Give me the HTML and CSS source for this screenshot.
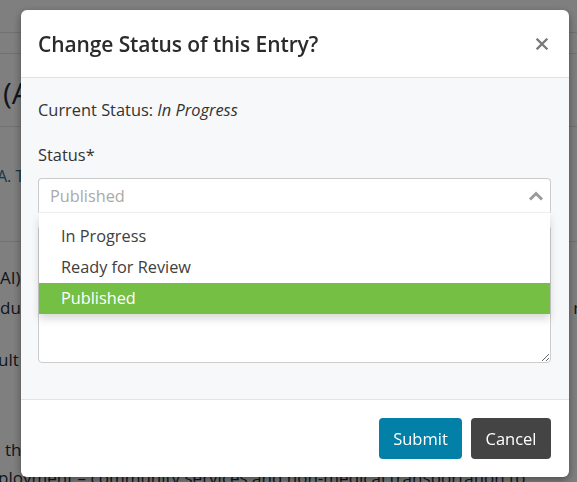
FILE: index.html
```html
<!DOCTYPE html>
<html>
<head>
<meta charset="utf-8">
<link rel="stylesheet" href="styles.css">
</head>
<body>
<div class="page">
  <div class="nav"></div>
  <div class="subnav"></div>
  <div class="title-band"><h1 class="page-title">(AI) Entry Record</h1></div>
  <div class="meta-band"><a class="author">A. Thompson, B. Rivera</a></div>
  <div class="content">
    <p class="line l1"><span>AI) the programme was developed to support</span><span class="tag">Re</span></p>
    <p class="line l2"><span>duced mobility across the regional network</span><span>rec</span></p>
    <p class="line l3"><span>ult was assessed at each stage of the study</span><span>ad</span></p>
    <p class="line l4"><span>the participants received home supports and</span><span>ro</span></p>
    <p class="line l5"><span>ployment – community services and non-medical transportation to</span></p>
  </div>
</div>

<div class="overlay"></div>

<div class="modal">
  <div class="modal-header">
    <h2 class="modal-title">Change Status of this Entry?</h2>
    <button class="close" aria-label="Close">
      <svg width="12" height="12" viewBox="0 0 12 12"><path d="M1.5 1.5 L10.5 10.5 M10.5 1.5 L1.5 10.5" stroke="#7a7a7a" stroke-width="2.3" stroke-linecap="square"/></svg>
    </button>
  </div>
  <div class="modal-body">
    <p class="current">Current Status: <em>In Progress</em></p>
    <label class="label">Status*</label>
    <div class="select-wrap">
      <div class="select">
        <span class="placeholder">Published</span>
        <svg class="chev" width="16" height="10" viewBox="0 0 16 10"><path d="M2 8.5 L8 2.5 L14 8.5" fill="none" stroke="#9a9a9a" stroke-width="3"/></svg>
      </div>
      <ul class="menu">
        <li class="opt">In Progress</li>
        <li class="opt">Ready for Review</li>
        <li class="opt active">Published</li>
      </ul>
    </div>
    <textarea class="notes"></textarea>
  </div>
  <div class="modal-footer">
    <button class="btn btn-submit">Submit</button>
    <button class="btn btn-cancel">Cancel</button>
  </div>
</div>
</body>
</html>
```

FILE: styles.css
```css
html, body {
  margin: 0;
  padding: 0;
  width: 577px;
  height: 482px;
  overflow: hidden;
  font-family: "Open Sans", "Noto Sans", sans-serif;
}

.page {
  background: #fff;
  color: #2c3a46;
}

.nav {
  height: 32px;
  border-bottom: 1px solid #e3e3e3;
}

.subnav {
  height: 20px;
  border-bottom: 1px solid #e3e3e3;
}

.title-band {
  height: 72px;
  border-bottom: 1px solid #e3e3e3;
  display: flex;
  align-items: center;
}

.page-title {
  margin: 4px 0 0 3px;
  font-size: 30px;
  font-weight: 400;
  white-space: nowrap;
  color: #1d2d3c;
}

.meta-band {
  height: 115px;
  box-sizing: border-box;
  padding-top: 38px;
  border-bottom: 1px solid #e3e3e3;
}

.author {
  display: block;
  margin-left: -3px;
  color: #2a6f8f;
  font-size: 16px;
  white-space: nowrap;
}

.content {
  font-size: 17px;
  color: #1d2d3c;
  padding-top: 21px;
}

.line {
  margin: 0;
  width: 600px;
  display: flex;
  justify-content: space-between;
  white-space: nowrap;
  line-height: 30px;
}

.l1 { margin-left: 0; width: 601px; }
.l2 { margin-left: 0; width: 598px; }
.l3 { margin-top: 22px; margin-left: -2px; width: 603px; }
.l4 { margin-top: 60px; margin-left: 5px; width: 594px; }
.l5 { margin-top: -2px; margin-left: -2px; }

.tag {
  background: #e9a54a;
  color: #fff;
  line-height: 20px;
  align-self: center;
  padding: 0 2px;
}

.overlay {
  position: fixed;
  inset: 0;
  background: rgba(0, 0, 0, 0.5);
}

.modal {
  position: fixed;
  top: 10px;
  left: 21px;
  width: 548px;
  height: 467px;
  background: #fff;
  border-radius: 6px;
  box-shadow: 0 3px 9px rgba(0, 0, 0, 0.4);
  display: flex;
  flex-direction: column;
  overflow: hidden;
  color: #333;
}

.modal-header {
  height: 68px;
  flex: none;
  box-sizing: border-box;
  border-bottom: 1px solid #dde2e6;
  display: flex;
  align-items: center;
  justify-content: space-between;
  padding: 0 21px 0 17px;
}

.modal-title {
  margin: 0;
  font-size: 21px;
  font-weight: 600;
  color: #2b2b2b;
  letter-spacing: -0.1px;
}

.close {
  border: 0;
  background: none;
  padding: 0;
  width: 12px;
  height: 12px;
  display: flex;
}

.modal-body {
  background: #f7f8fa;
  height: 322px;
  flex: none;
  box-sizing: border-box;
  border-bottom: 1px solid #e2e4e7;
  padding: 21px 18px 0 17px;
  display: flex;
  flex-direction: column;
}

.current {
  margin: 0;
  font-size: 16.4px;
  line-height: 22px;
  color: #333;
}

.label {
  margin-top: 23px;
  font-size: 16.4px;
  line-height: 22px;
  color: #333;
}

.select-wrap {
  position: relative;
  margin-top: 12px;
}

.select {
  height: 35px;
  box-sizing: border-box;
  border: 1px solid #ccc;
  border-bottom-color: #f1f1f1;
  border-radius: 4px 4px 0 0;
  background: #fff;
  display: flex;
  align-items: center;
  justify-content: space-between;
  padding: 0 6px 0 11px;
}

.placeholder {
  font-size: 16.3px;
  color: #a9a9a9;
}

.menu {
  position: absolute;
  top: 35px;
  left: 1px;
  right: 1px;
  margin: 0;
  padding: 8px 0 0;
  list-style: none;
  background: #fff;
  box-shadow: 0 5px 8px rgba(0, 0, 0, 0.15);
  z-index: 2;
}

.opt {
  height: 31px;
  line-height: 31px;
  padding-left: 22px;
  font-size: 16.3px;
  color: #404040;
}

.opt.active {
  background: #75bf45;
  color: #fff;
}

.notes {
  margin-top: 12px;
  height: 138px;
  box-sizing: border-box;
  border: 1px solid #ccc;
  border-radius: 4px;
  background: #fff;
  resize: vertical;
  width: 100%;
}

.modal-footer {
  flex: 1;
  display: flex;
  justify-content: flex-end;
  align-items: flex-start;
  gap: 9px;
  padding: 18px 18px 0 0;
}

.btn {
  height: 41px;
  border: 0;
  border-radius: 4px;
  color: #fff;
  font-family: inherit;
  font-size: 16.5px;
  padding: 0 14px;
}

.btn-submit {
  background: #0280a8;
  width: 83px;
}

.btn-cancel {
  background: #444;
  width: 80px;
}
```
